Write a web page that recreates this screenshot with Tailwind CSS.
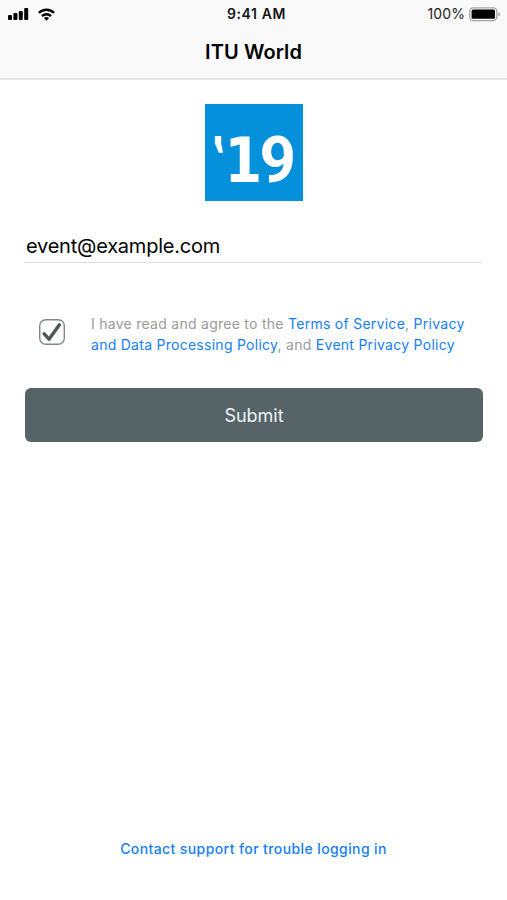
<!DOCTYPE html>
<html lang="en">
<head>
<meta charset="utf-8">
<meta name="viewport" content="width=device-width, initial-scale=1">
<title>ITU World</title>
<script src="https://cdn.jsdelivr.net/npm/@tailwindcss/browser@4"></script>
</head>
<body class="bg-white font-['Inter','Liberation_Sans',sans-serif] text-black">
<div class="flex h-[900px] w-[507px] flex-col overflow-hidden">
  <header class="h-20 shrink-0 border-b-2 border-[#e6e6e6] bg-[#f9f9f9]">
    <div class="grid h-7 grid-cols-3 items-center pr-[7px] pl-2">
      <div class="flex items-center gap-[9px]">
        <svg class="h-3 w-[21px]" viewBox="0 0 21 12"><rect x="0" y="7" width="4" height="5" rx="1"/><rect x="5.4" y="5" width="4" height="7" rx="1"/><rect x="10.8" y="3" width="4" height="9" rx="1"/><rect x="16.2" y="0" width="4" height="12" rx="1"/></svg>
        <svg class="h-[13px] w-[17px]" viewBox="0 0 17 13" fill="none" stroke="#000" stroke-width="2.4"><path d="M.9 4.9C5.1.7 11.9.7 16.1 4.9"/><path d="M4 8.1c2.5-2.5 6.500-2.500 9 0"/><path d="M8.500 12.700 5.900 10.100c1.500-1.500 3.700-1.500 5.200 0z" fill="#000" stroke="none"/></svg>
      </div>
      <div class="pl-[5px] text-center text-sm leading-7 font-semibold tracking-[0.6px] whitespace-nowrap text-[#151515]">9:41 AM</div>
      <div class="flex items-center justify-end gap-1">
        <span class="text-sm tracking-[0.1px] text-[#222]">100%</span>
        <svg class="h-[15px] w-[31px]" viewBox="0 0 31 15"><rect x=".8" y=".8" width="27" height="12.800" rx="3.500" fill="#f9f9f9" stroke="#a5a5a5" stroke-width="1.300"/><rect x="2.600" y="2.600" width="23.400" height="9.200" rx="1.500"/><path d="M29.300 5v4.500q1.700-.6 1.700-2.250T29.300 5" fill="#a5a5a5"/></svg>
      </div>
    </div>
    <h1 class="pt-[9px] text-center text-[20px] leading-[30px] font-semibold tracking-[0.1px]">ITU World</h1>
  </header>
  <main class="flex flex-1 flex-col px-[25px] pt-6">
    <svg class="h-[97px] w-[98px] self-center" viewBox="0 0 98 97">
      <rect width="98" height="97" fill="#0590db"/>
      <g fill="#fff" font-weight="700">
        <text transform="translate(7.500 71) scale(.68 1)" font-family="DejaVu Sans" font-size="54">‛</text>
        <text transform="translate(19.500 78) scale(.86 1)" font-family="DejaVu Sans" font-size="63">1</text>
        <text transform="translate(54.500 77.500) scale(.98 1)" font-family="Roboto" font-size="65">9</text>
      </g>
    </svg>
    <div class="mt-[30px] h-8 border-b border-[#dedede] pl-px text-[20px] leading-[30px] tracking-[-0.22px]">event@example.com</div>
    <div class="mt-[50px] flex">
      <svg class="mt-[5px] ml-[13px] h-7 w-7 shrink-0" viewBox="0 0 28 28" fill="none"><rect x="1.700" y="1.700" width="24.600" height="24.600" rx="6" stroke="#818a8c" stroke-width="1.400"/><path d="M6.200 15.800 11 21.200 21.400 6.800" stroke="#4a575b" stroke-width="3.400" stroke-linecap="round" stroke-linejoin="round"/></svg>
      <p class="ml-[25px] text-sm leading-[21.400px] tracking-[0.27px] whitespace-nowrap text-[#9a9a9a]">I have read and agree to the <a class="text-[#1580f5]">Terms of Service</a>, <a class="text-[#1580f5]">Privacy<br>and Data Processing Policy</a>, and <a class="text-[#1580f5]">Event Privacy Policy</a></p>
    </div>
    <button class="mt-[32.200px] h-[54px] w-[458px] shrink-0 rounded-md bg-[#566468] text-[18px] text-[#edf2f3]">Submit</button>
    <a class="mt-auto mb-[41px] text-center text-sm leading-5 font-medium tracking-[0.4px] text-[#1580f5]">Contact support for trouble logging in</a>
  </main>
</div>
</body>
</html>
